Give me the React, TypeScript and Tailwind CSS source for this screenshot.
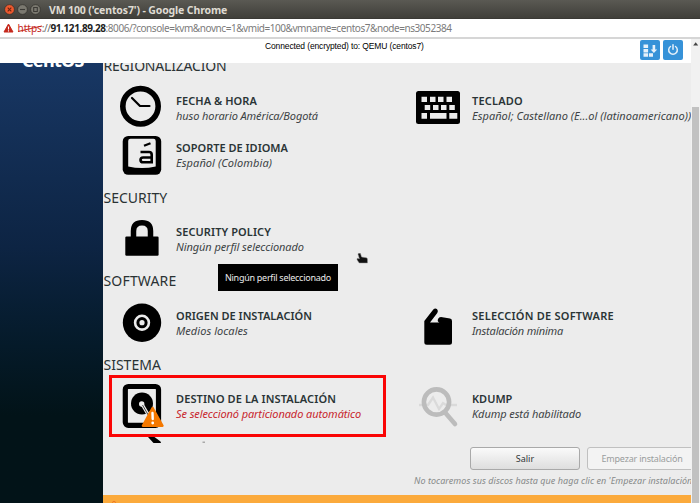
import type { ReactNode } from "react";

type ItemProps = {
  title: string;
  titleClass?: string;
  status: string;
  statusClass?: string;
  icon: ReactNode;
};

function Item({ title, titleClass = "", status, statusClass = "text-[#3c4345]", icon }: ItemProps) {
  return (
    <div className="flex h-full items-center">
      <div className="h-full w-[73px] shrink-0">{icon}</div>
      <div className="pb-px text-[11px] leading-[15px] whitespace-nowrap">
        <div className={`font-semibold text-[#2a3436] ${titleClass}`}>{title}</div>
        <div className={`italic ${statusClass}`}>{status}</div>
      </div>
    </div>
  );
}

function Icon({ viewBox, children }: { viewBox: string; children: ReactNode }) {
  return (
    <svg viewBox={viewBox} className="block h-full w-[73px] overflow-visible">
      {children}
    </svg>
  );
}

function Heading({ children, className = "" }: { children: ReactNode; className?: string }) {
  return (
    <h2 className={`h-[22px] pl-[0.5px] text-[14px] leading-[22px] text-[#2a3234] ${className}`}>{children}</h2>
  );
}

const clock = (
  <Icon viewBox="103 85 73 47">
    <circle cx="140.500" cy="106.300" r="17.700" fill="none" stroke="#000" strokeWidth="5.600" />
    <path d="M132 98l8 8h9.500" fill="none" stroke="#000" strokeWidth="2.200" strokeLinecap="round" strokeLinejoin="round" />
  </Icon>
);

const language = (
  <Icon viewBox="103 132 73 47">
    <rect x="122.700" y="136" width="38.500" height="38.800" rx="5.500" />
    <path d="M130.500 138.700h23q2.200 0 2.200 2.200v25.600q-13.800 3.200-27.500 0v-25.600q0-2.200 2.300-2.200z" fill="#ececec" />
    <path d="M144 145.700l6.500-2.500" stroke="#000" strokeWidth="2.300" strokeLinecap="butt" />
    <path d="M140.500 152h8.500q2.700 0 2.700 2.700v7.500h-8.500q-2.700 0-2.700-2.300t2.700-2.400h8" fill="none" stroke="#000" strokeWidth="2.600" />
  </Icon>
);

const keyboard = (
  <Icon viewBox="399 85 73 47">
    <rect x="416" y="91" width="44" height="33" rx="2.500" />
    <g fill="#ececec">
      <path d="M421.500 96.700h5.500v5.300h-5.500zM430 96.700h5.500v5.300H430zM438 96.700h5.500v5.300H438zM446.500 96.700h5.500v5.300h-5.500z" />
      <path d="M424.700 105h5.500v5h-5.500zM433 105h5.500v5H433zM441 105h5.500v5H441zM449.300 105h5.500v5h-5.500z" />
      <path d="M421.500 113h5.500v5.700h-5.500zM430 113h16.500v5.700H430zM449.300 113h8v5.700h-8z" />
    </g>
  </Icon>
);

const lock = (
  <Icon viewBox="103 209 73 61">
    <rect x="125.300" y="236.500" width="33.300" height="19.300" rx="1.200" />
    <path d="M133.500 238v-7q0-8.300 8.500-8.300t8.500 8.300v7" fill="none" stroke="#000" strokeWidth="5.500" />
  </Icon>
);

const disc = (
  <Icon viewBox="103 292 73 62">
    <circle cx="142" cy="322.700" r="19.200" />
    <circle cx="142" cy="322.700" r="6.900" fill="none" stroke="#ececec" strokeWidth="2.600" />
    <circle cx="142" cy="322.700" r="2.600" fill="#ececec" />
  </Icon>
);

const bag = (
  <Icon viewBox="399 292 73 62">
    <path d="M424.300 321l9-11.500q2-1.700 3.800-.2 1.500 1.700.2 3.700l-7.300 9.500h9.500q-2.500-1-1.500-3.500.8-2 3-2l9 1.600q2 .4 2 2.400v21.200q0 2.500-2.500 2.500h-22.700q-2.500 0-2.500-2.500z" />
  </Icon>
);

const disk = (
  <Icon viewBox="103 376 73 61">
    <rect x="125.300" y="386.500" width="33.200" height="38.800" rx="3" fill="#ececec" stroke="#000" strokeWidth="5.200" />
    <circle cx="142" cy="403.500" r="11" />
    <circle cx="141.700" cy="404" r="2.700" fill="#ececec" />
    <path d="M142.500 405l10 17" stroke="#ececec" strokeWidth="3.200" />
    <path d="M142.500 405l8 14" stroke="#000" strokeWidth=".7" />
    <path d="M152.600 407.800l10 18h-19.800z" fill="#f57900" stroke="#f57900" strokeWidth="2.200" strokeLinejoin="round" />
    <path d="M152.500 413l.2 6" stroke="#fff" strokeWidth="2.400" strokeLinecap="round" />
    <circle cx="152.700" cy="423" r="1.400" fill="#fff" />
  </Icon>
);

const magnifier = (
  <Icon viewBox="399 376 73 61">
    <path d="M419 405h9l5-7.500 6 11.500 4-6 3 2h11" fill="none" stroke="#dadada" strokeWidth="2.300" />
    <circle cx="436.500" cy="402" r="12.600" fill="none" stroke="#bcbcbc" strokeWidth="4.600" />
    <path d="M445.500 413l9.500 11" stroke="#bcbcbc" strokeWidth="4.600" strokeLinecap="round" />
  </Icon>
);

function WindowButton({ close = false, children }: { close?: boolean; children: ReactNode }) {
  return (
    <svg viewBox="0 0 11 11" className="size-[11px]">
      <circle cx="5.500" cy="5.500" r="4.900" fill={close ? "#ef5a2f" : "#7b7970"} stroke="#33322d" strokeWidth=".8" />
      <g fill="none" stroke={close ? "#6b2410" : "#3b3a35"} strokeWidth="1.100">{children}</g>
    </svg>
  );
}

export default function App() {
  return (
    <div className="flex h-[503px] w-[700px] flex-col overflow-hidden bg-white font-['Noto_Sans',sans-serif]">
      <header className="flex h-[19px] shrink-0 items-center border-b border-[#3a3935] bg-linear-to-b from-[#5a5953] to-[#403f3a] pl-[4px]">
        <div className="flex gap-[2px]">
          <WindowButton close><path d="M3.700 3.700l3.600 3.600M7.300 3.700l-3.600 3.600" /></WindowButton>
          <WindowButton><path d="M3 5.500h5" /></WindowButton>
          <WindowButton><path d="M3.700 3.500h3.600v4H3.700z" /></WindowButton>
        </div>
        <h1 className="mt-px ml-[8px] text-[10.5px] leading-[18px] font-bold tracking-[-0.13px] whitespace-nowrap text-[#dfdbd2]">
          VM 100 ('centos7') - Google Chrome
        </h1>
      </header>

      <div className="flex h-5 shrink-0 items-center border-b-2 border-[#d6d6d6] pl-[3px] text-[10px] leading-[18px] whitespace-nowrap">
        <svg viewBox="0 0 11 10" className="h-[10px] w-[11px]">
          <path d="M5.500 1L10 9H1z" fill="#c5281c" stroke="#c5281c" strokeLinejoin="round" />
          <path d="M5.500 3.500v3M5.500 7.300v1.200" stroke="#fff" strokeWidth="1.100" />
        </svg>
        <span className="relative ml-[3.500px] text-[#c5281c]">
          https
          <svg viewBox="0 0 24 8" className="absolute top-[6px] left-0 h-2 w-6">
            <path d="M0 6.500L24 1" stroke="#c5281c" strokeWidth="1.200" />
          </svg>
        </span>
        <span className="tracking-[-0.5px] text-[#666]">://</span>
        <span className="font-bold tracking-[-0.4px] text-[#222]">91.121.89.28</span>
        <span className="tracking-[-0.44px] text-[#7b7b7b]">
          :8006/?console=kvm&amp;novnc=1&amp;vmid=100&amp;vmname=centos7&amp;node=ns3052384
        </span>
      </div>

      <div className="flex min-h-0 flex-1">
        <div className="flex w-[691px] shrink-0 flex-col">
          <div className="flex h-6 shrink-0 items-start">
            <div className="w-[634px] pl-[265px] font-['Liberation_Sans',sans-serif] text-[8.5px] leading-[14px] tracking-[-0.13px] whitespace-nowrap text-black">
              Connected (encrypted) to: QEMU (centos7)
            </div>
            <div className="flex gap-[3px] pt-[1px] pl-[6px]">
              <button className="size-[20px] rounded-[2px] bg-[#3692d8]">
                <svg viewBox="0 0 20 20" className="size-5" fill="#e6f1fa">
                  <path d="M3.500 4.500h4.600v3.400H3.500zM3.500 9h4.600v3.400H3.500zM3.500 13.300h4.600v3.400H3.500zM9 13.300h4v3.400H9zM12.600 5h2.600v4.500h2l-3.300 3.600-3.300-3.600h2z" />
                </svg>
              </button>
              <button className="size-[20px] rounded-[2px] bg-[#3692d8]">
                <svg viewBox="0 0 20 20" className="size-5" fill="none" stroke="#e6f1fa" strokeWidth="1.500" strokeLinecap="round">
                  <path d="M7.500 6.500a4.300 4.300 0 1 0 5 0M10 4.800v4.500" />
                </svg>
              </button>
            </div>
          </div>

          <div className="flex min-h-0 flex-1">
            <aside className="w-[103px] shrink-0 overflow-hidden bg-linear-to-b from-[#183764] via-[#0d2443] via-42% to-[#021318] to-80%">
              <div className="-mt-[13px] pl-[22px] text-[18px] leading-[20px] font-bold tracking-[-0.7px] text-white">
                CentOS
              </div>
            </aside>

            <main className="relative flex min-w-0 flex-1 flex-col overflow-hidden bg-[#ececec]">
              <div className="h-[380px] shrink-0 overflow-hidden">
                <Heading className="-mt-[8px] tracking-[-0.2px]">REGIONALIZACIÓN</Heading>
                <div className="mt-[8px] grid grid-cols-[296px_296px] grid-rows-[47px_47px]">
                  <Item title="FECHA & HORA" titleClass="tracking-[0.07px]" status="huso horario América/Bogotá" statusClass="tracking-[-0.1px] text-[#3c4345]" icon={clock} />
                  <Item title="TECLADO" titleClass="tracking-[0.2px]" status="Español; Castellano (E...ol (latinoamericano))" statusClass="tracking-[0.04px] text-[#3c4345]" icon={keyboard} />
                  <Item title="SOPORTE DE IDIOMA" status="Español (Colombia)" statusClass="tracking-[0.09px] text-[#3c4345]" icon={language} />
                </div>

                <Heading className="mt-[8px]">SECURITY</Heading>
                <div className="h-[61px]">
                  <Item title="SECURITY POLICY" titleClass="tracking-[0.1px]" status="Ningún perfil seleccionado" statusClass="tracking-[-0.08px] text-[#3c4345]" icon={lock} />
                </div>

                <Heading className="tracking-[0.17px]">SOFTWARE</Heading>
                <div className="grid h-[62px] grid-cols-[296px_296px]">
                  <Item title="ORIGEN DE INSTALACIÓN" status="Medios locales" statusClass="tracking-[0.06px] text-[#3c4345]" icon={disc} />
                  <Item title="SELECCIÓN DE SOFTWARE" titleClass="tracking-[0.23px]" status="Instalación mínima" statusClass="tracking-[-0.19px] text-[#3c4345]" icon={bag} />
                </div>

                <Heading>SISTEMA</Heading>
                <div className="grid h-[61px] grid-cols-[296px_296px]">
                  <Item title="DESTINO DE LA INSTALACIÓN" titleClass="tracking-[0.1px]" status="Se seleccionó particionado automático" statusClass="tracking-[-0.09px] text-[#c8262c]" icon={disk} />
                  <Item title="KDUMP" status="Kdump está habilitado" statusClass="tracking-[-0.08px] text-[#3c4345]" icon={magnifier} />
                </div>
                <svg viewBox="0 0 200 6" className="block h-[6px] w-[200px]">
                  <path d="M45 0h6.500l6 4.500L58 6h-7.500z" />
                  <path d="M99.500 4.500h2.500V6h-2.500z" fill="#aaa" />
                </svg>
              </div>

              <div className="mt-[4px] flex shrink-0 gap-[7px] pl-[367px] text-[9px]">
                <button className="h-[23px] w-[110px] shrink-0 rounded-[3px] border border-[#a9a9a9] bg-linear-to-b from-[#fafafa] to-[#dedede] text-[#2e3436]">Salir</button>
                <button className="h-[23px] w-[110px] shrink-0 rounded-[3px] border border-[#c0c0c0] bg-[#f3f3f3] tracking-[-0.2px] text-[#9a9d9d]">Empezar instalación</button>
              </div>
              <p className="mt-[4px] pl-[311px] text-[9px] leading-[14px] tracking-[0.05px] whitespace-nowrap text-[#868989] italic">
                No tocaremos sus discos hasta que haga clic en 'Empezar instalación'
              </p>
              <div className="mt-auto h-[8px] shrink-0 overflow-hidden bg-[#fbaa3c] pl-[8px]">
                <svg viewBox="0 0 6 8" className="h-2 w-[6px]">
                  <circle cx="3" cy="7.800" r="1.500" fill="none" stroke="#ee7a26" />
                </svg>
              </div>

              <div className="absolute top-[312px] left-[6px] h-[62px] w-[277px] border-3 border-[#fa0505]" />
              <div className="absolute top-[201px] left-[115px] h-[27px] w-[120px] bg-black pl-[7px] text-[9px] leading-[28px] tracking-[-0.27px] whitespace-nowrap text-[#eaeaea]">
                Ningún perfil seleccionado
              </div>
              <svg viewBox="0 0 12 12" className="absolute top-[190px] left-[253px] size-3">
                <path d="M2 1.200q0-.9 1-.9h1.400L5.600 4l4.700.7q1.200.3 1.200 1.800V10H3.200L1 6.800l.2-1.500 2.200.5z" fill="#111" stroke="#999" strokeWidth=".5" />
              </svg>
            </main>
          </div>
        </div>

        <div className="flex w-[9px] shrink-0 flex-col items-center bg-[#f1f1f1]">
          <svg viewBox="0 0 9 10" className="h-[10px] w-[9px]">
            <path d="M4.700 3.200L7.200 6.400h-5z" fill="#444" />
          </svg>
          <div className="mt-[58px] w-[7px] flex-1 bg-[#c1c1c1]" />
        </div>
      </div>
    </div>
  );
}
